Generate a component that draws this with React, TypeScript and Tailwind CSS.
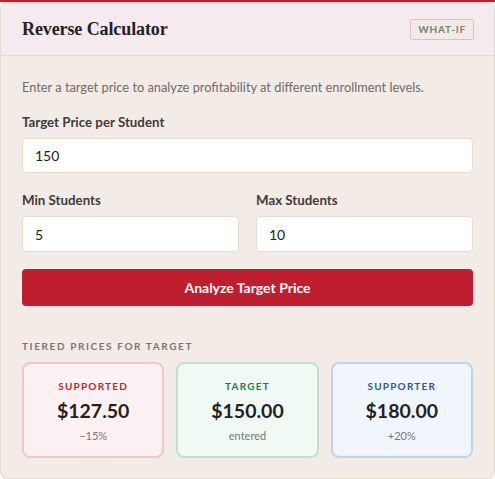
import React from "react";

const tiers = [
  { label: "SUPPORTED", price: "$127.50", sub: "\u221215%", box: "bg-[#fcf1f2] border-[#f4c5ca]", lc: "text-[#c41e30]" },
  { label: "TARGET", price: "$150.00", sub: "entered", box: "bg-[#f0f9f4] border-[#bce2c9]", lc: "text-[#1f7a43]" },
  { label: "SUPPORTER", price: "$180.00", sub: "+20%", box: "bg-[#f1f6fd] border-[#bcd5ef]", lc: "text-[#2b5896]" },
];

export default function App() {
  return (
    <div className="w-[495px] h-[479px] bg-white overflow-hidden" style={{ fontFamily: "Lato, 'Open Sans', sans-serif" }}>
      <div className="h-[2px] bg-[#c41e30]" />
      <div className="rounded-lg border border-[#e5dbd0] bg-[#f3ece6] overflow-hidden shadow-[0_1px_4px_rgba(0,0,0,0.08)]">
        <div className="h-[53px] bg-[#f5eaee] border-b border-[#e6d8d6] flex items-center justify-between pl-[21px] pr-[20px]">
          <h2 className="text-[18px] font-bold text-[#222] tracking-[-0.1px]" style={{ fontFamily: "'Liberation Serif', 'DejaVu Serif', serif" }}>
            Reverse Calculator
          </h2>
          <span className="h-[21px] px-[7px] flex items-center border border-[#e3bccb] rounded-[2px] bg-[#f3ece6] text-[10px] font-bold tracking-[0.8px] text-[#7a7a7a]">
            WHAT-IF
          </span>
        </div>
        <div className="px-[21px] pt-[22px] pb-[20px]">
          <p className="text-[12.8px] text-[#6f6a66] leading-[18px]">
            Enter a target price to analyze profitability at different enrollment levels.
          </p>
          <label className="block mt-[17px] text-[13.3px] font-bold text-[#3f3b38] leading-[18px]">Target Price per Student</label>
          <div className="mt-[7px] h-[35px] bg-white border border-[#e8dccb] rounded-[4px] flex items-center px-[12px] text-[14px] text-[#222]">150</div>
          <div className="mt-[18px] grid grid-cols-2 gap-[17px]">
            <div>
              <label className="block text-[13.3px] font-bold text-[#3f3b38] leading-[18px]">Min Students</label>
              <div className="mt-[7px] h-[36px] bg-white border border-[#e8dccb] rounded-[4px] flex items-center px-[12px] text-[14px] text-[#222]">5</div>
            </div>
            <div>
              <label className="block text-[13.3px] font-bold text-[#3f3b38] leading-[18px]">Max Students</label>
              <div className="mt-[7px] h-[36px] bg-white border border-[#e8dccb] rounded-[4px] flex items-center px-[12px] text-[14px] text-[#222]">10</div>
            </div>
          </div>
          <button className="mt-[17px] w-full h-[37px] rounded-[4px] bg-[#be1e2d] text-white text-[14px] font-bold flex items-center justify-center">
            Analyze Target Price
          </button>
          <div className="mt-[33px] text-[10px] font-bold tracking-[1.6px] text-[#7a7572] leading-[14px]">TIERED PRICES FOR TARGET</div>
          <div className="mt-[9px] grid grid-cols-3 gap-[12px]">
            {tiers.map((t) => (
              <div key={t.label} className={`h-[96px] border-2 rounded-[8px] flex flex-col items-center pt-[15px] ${t.box}`}>
                <div className={`text-[10px] font-bold tracking-[1.2px] leading-[14px] ${t.lc}`}>{t.label}</div>
                <div className="mt-[6px] text-[19.5px] font-bold text-[#222] leading-[24px]">{t.price}</div>
                <div className="mt-[6px] text-[11px] text-[#777] leading-[14px]">{t.sub}</div>
              </div>
            ))}
          </div>
        </div>
      </div>
    </div>
  );
}
